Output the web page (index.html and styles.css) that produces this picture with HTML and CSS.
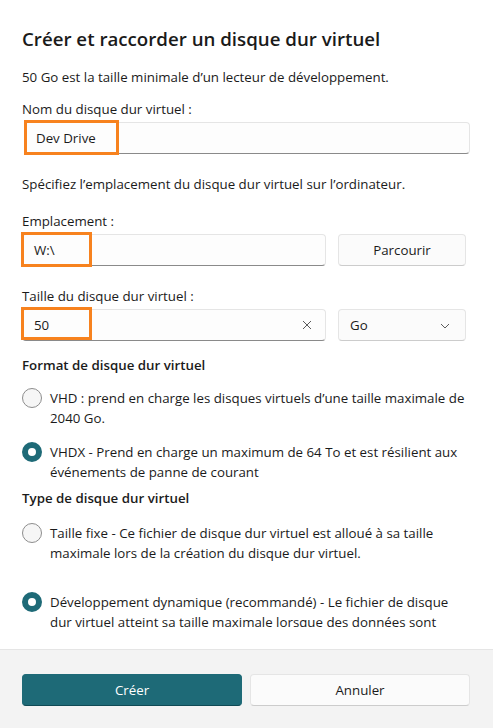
FILE: index.html
```html
<!DOCTYPE html>
<html lang="fr">
<head>
<meta charset="utf-8">
<title>Créer et raccorder un disque dur virtuel</title>
<link rel="stylesheet" href="styles.css">
</head>
<body>
<div class="dialog">
  <div class="content">
    <h1 class="title">Créer et raccorder un disque dur virtuel</h1>
    <p class="text desc">50 Go est la taille minimale d’un lecteur de développement.</p>
    <label class="text label l1">Nom du disque dur virtuel :</label>
    <div class="field full">
      <div class="input">Dev Drive</div>
      <span class="mark mark1"></span>
    </div>
    <p class="text spec">Spécifiez l’emplacement du disque dur virtuel sur l’ordinateur.</p>
    <label class="text label l2">Emplacement :</label>
    <div class="row">
      <div class="field half">
        <div class="input">W:\</div>
        <span class="mark mark2"></span>
      </div>
      <div class="btn side">Parcourir</div>
    </div>
    <label class="text label l3">Taille du disque dur virtuel :</label>
    <div class="row">
      <div class="field half">
        <div class="input">50
          <svg class="clear" width="10" height="10" viewBox="0 0 10 10"><path d="M1 1L9 9M9 1L1 9" stroke="#5c5c5c" stroke-width="1" fill="none"/></svg>
        </div>
        <span class="mark mark3"></span>
      </div>
      <div class="btn side combo">Go
        <svg class="chev" width="10" height="6" viewBox="0 0 10 6"><path d="M1 1L5 5L9 1" stroke="#5c5c5c" stroke-width="1" fill="none"/></svg>
      </div>
    </div>
    <h2 class="text heading h-format">Format de disque dur virtuel</h2>
    <div class="radio r1">
      <span class="dot"></span>
      <span class="rtext">VHD : prend en charge les disques virtuels d’une taille maximale de 2040 Go.</span>
    </div>
    <div class="radio r2">
      <span class="dot on"></span>
      <span class="rtext">VHDX - Prend en charge un maximum de 64 To et est résilient aux événements de panne de courant</span>
    </div>
    <h2 class="text heading h-type">Type de disque dur virtuel</h2>
    <div class="radio r3">
      <span class="dot"></span>
      <span class="rtext">Taille fixe - Ce fichier de disque dur virtuel est alloué à sa taille maximale lors de la création du disque dur virtuel.</span>
    </div>
    <div class="radio r4">
      <span class="dot on"></span>
      <span class="rtext">Développement dynamique (recommandé) - Le fichier de disque dur virtuel atteint sa taille maximale lorsque des données sont écrites sur le disque.</span>
    </div>
  </div>
  <div class="footer">
    <div class="btn primary">Créer</div>
    <div class="btn">Annuler</div>
  </div>
</div>
</body>
</html>
```

FILE: styles.css
```css
* { box-sizing: border-box; }
html, body { margin: 0; padding: 0; }
body {
  width: 493px;
  height: 728px;
  overflow: hidden;
  background: #ffffff;
  font-family: "Open Sans", "Noto Sans", sans-serif;
  font-size: 13.3px;
  color: #1b1b1b;
}
.dialog {
  height: 728px;
  display: flex;
  flex-direction: column;
}
.content {
  height: 627px;
  overflow: hidden;
  padding: 25px 23px 0 22px;
  flex: none;
}
.title {
  margin: 0;
  font-size: 18.7px;
  line-height: 28px;
  font-weight: 600;
  color: #1a1a1a;
}
.text {
  display: block;
  margin: 0;
  line-height: 20px;
  font-size: 13.3px;
  font-weight: 400;
}
.desc { margin-top: 14px; }
.l1 { margin-top: 12px; }
.spec { margin-top: 20px; }
.l2 { margin-top: 17px; }
.l3 { margin-top: 20px; }
.heading { font-weight: 600; }
.h-format { margin-top: 14px; }
.h-type { margin-top: 6px; }

.field { position: relative; margin-top: 3px; }
.full { margin-left: 2px; }
.row {
  display: flex;
  gap: 12px;
  margin-top: 3px;
}
.row .field { margin-top: 0; }
.half { width: 304px; }
.input {
  height: 32px;
  border: 1px solid #e5e5e5;
  border-bottom: 1px solid #8a8a8a;
  border-radius: 4px;
  background: #fdfdfd;
  padding: 0 11px;
  display: flex;
  align-items: center;
  position: relative;
}
.clear { position: absolute; right: 13px; top: 10px; }
.mark {
  position: absolute;
  border: 3px solid #f7821e;
  pointer-events: none;
}
.mark1 { left: 0; top: -2px; width: 95px; height: 35px; }
.mark2 { left: -1px; top: -2px; width: 71px; height: 35px; }
.mark3 { left: -1px; top: -2px; width: 71px; height: 33px; }

.btn {
  height: 32px;
  border: 1px solid #e5e5e5;
  border-bottom-color: #cccccc;
  border-radius: 4px;
  background: #fbfbfb;
  display: flex;
  align-items: center;
  justify-content: center;
  color: #1b1b1b;
}
.side { width: 128px; }
.combo { justify-content: flex-start; padding-left: 11px; position: relative; }
.chev { position: absolute; right: 15px; top: 13px; }

.radio {
  display: flex;
  gap: 8px;
  line-height: 20px;
}
.r1 { margin-top: 13px; }
.r2 { margin-top: 14px; }
.r3 { margin-top: 15px; }
.r4 { margin-top: 29px; }
.dot {
  flex: none;
  width: 20px;
  height: 20px;
  border-radius: 50%;
  border: 1px solid #8d8d8d;
  background: #f6f6f6;
}
.dot.on {
  border: 6px solid #1e6a77;
  background: #ffffff;
}
.rtext { flex: 1; }

.footer {
  flex: 1;
  margin-top: 22px;
  background: #f3f3f3;
  border-top: 1px solid #e5e5e5;
  padding: 24px 23px 0 22px;
  display: grid;
  grid-template-columns: 1fr 1fr;
  column-gap: 8px;
  align-content: start;
}
.footer .btn { height: 32px; }
.primary {
  background: #1e6a77;
  border-color: #1e6a77;
  border-bottom-color: #0f4a55;
  color: #ffffff;
}
```
